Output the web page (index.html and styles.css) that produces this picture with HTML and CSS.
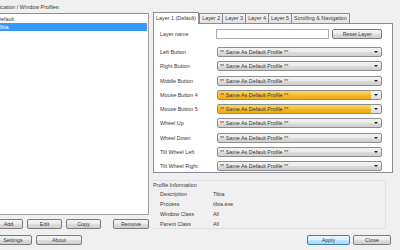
FILE: index.html
```html
<!DOCTYPE html>
<html lang="en">
    <head>
        <meta charset="UTF-8">
        <title>Profiles</title>
        <link rel="stylesheet" href="styles.css">
    </head>
    <body>
        <div class="window">
            <div class="main">
                <div class="profiles">
                    <div class="caption">Application / Window Profiles:</div>
                    <ul class="profile-list">
                        <li>Default</li>
                        <li class="selected">Tibia</li>
                    </ul>
                    <div class="list-buttons">
                        <button class="btn add">Add</button>
                        <button class="btn edit">Edit</button>
                        <button class="btn copy">Copy</button>
                        <button class="btn remove">Remove</button>
                    </div>
                </div>

                <div class="layers">
                    <div class="tabs">
                        <div class="tab active">Layer 1 (Default)</div>
                        <div class="tab">Layer 2</div>
                        <div class="tab">Layer 3</div>
                        <div class="tab">Layer 4</div>
                        <div class="tab">Layer 5</div>
                        <div class="tab">Scrolling &amp; Navigation</div>
                    </div>
                    <div class="tab-panel">
                        <div class="name-row">
                            <span class="label">Layer name</span>
                            <input class="name" type="text">
                            <button class="btn reset">Reset Layer</button>
                        </div>
                        <div class="mappings">
                            <span class="label">Left Button</span>
                            <div class="combo">** Same As Default Profile **</div>
                            <span class="label">Right Button</span>
                            <div class="combo">** Same As Default Profile **</div>
                            <span class="label">Middle Button</span>
                            <div class="combo">** Same As Default Profile **</div>
                            <span class="label">Mouse Button 4</span>
                            <div class="combo changed">** Same As Default Profile **</div>
                            <span class="label">Mouse Button 5</span>
                            <div class="combo changed">** Same As Default Profile **</div>
                            <span class="label">Wheel Up</span>
                            <div class="combo">** Same As Default Profile **</div>
                            <span class="label">Wheel Down</span>
                            <div class="combo">** Same As Default Profile **</div>
                            <span class="label">Tilt Wheel Left</span>
                            <div class="combo">** Same As Default Profile **</div>
                            <span class="label">Tilt Wheel Right</span>
                            <div class="combo">** Same As Default Profile **</div>
                        </div>
                    </div>
                    <div class="info">
                        <div class="info-title">Profile Information</div>
                        <div class="info-grid">
                            <span>Description</span><span>Tibia</span>
                            <span>Process</span><span>tibia.exe</span>
                            <span>Window Class</span><span>All</span>
                            <span>Parent Class</span><span>All</span>
                        </div>
                    </div>
                </div>
            </div>

            <div class="footer">
                <button class="btn settings">Settings</button>
                <button class="btn about">About</button>
                <div class="spacer"></div>
                <button class="btn apply">Apply</button>
                <button class="btn close">Close</button>
            </div>
        </div>
    </body>
</html>
```

FILE: styles.css
```css
html, body {
    margin: 0;
    padding: 0;
}

body {
    width: 400px;
    height: 250px;
    overflow: hidden;
    background-color: #f0f0f0;
    font-family: "Liberation Sans", Arial, sans-serif;
    font-size: 5.4px;
    color: #3a3a3a;
}

.window {
    display: flex;
    flex-direction: column;
    height: 250px;
}

.main {
    display: flex;
    gap: 4px;
    height: 235px;
}

/* left column, partly cut off by the screenshot edge */
.profiles {
    width: 155px;
    margin-left: -6px;
    display: flex;
    flex-direction: column;
}

.caption {
    height: 13px;
    line-height: 15px;
    margin-left: -5px;
    white-space: nowrap;
}

.profile-list {
    list-style: none;
    margin: 0;
    padding: 1px 1px;
    height: 198px;
    background: #fff;
    border: 1px solid #a0a0a0;
    border-left-color: #c8c8c8;
    border-top-color: #8e8f8f;
}

.profile-list li {
    height: 8px;
    line-height: 8px;
    padding-left: 1px;
}

.profile-list .selected {
    background-color: #3399ff;
    color: #fff;
}

.list-buttons {
    display: flex;
    margin-top: 4px;
    gap: 4px;
}

.btn {
    height: 10px;
    padding: 0;
    font-family: inherit;
    font-size: 5.4px;
    line-height: 8px;
    color: #3a3a3a;
    border: 1px solid #7a7a7a;
    border-radius: 2px;
    background: linear-gradient(#f4f4f4, #ebebeb 50%, #dddddd 50%, #cfcfcf);
}

.add { width: 29px; }
.edit { width: 35px; }
.copy { width: 35px; }
.remove { width: 36px; margin-left: auto; }

/* right column */
.layers {
    width: 240px;
    display: flex;
    flex-direction: column;
}

.tabs {
    display: flex;
    align-items: flex-end;
    height: 11px;
    margin-top: 12px;
    position: relative;
    z-index: 1;
}

.tab {
    height: 9px;
    line-height: 9px;
    padding: 0 2px;
    border: 1px solid #898c95;
    border-bottom: none;
    margin-left: -1px;
    background: linear-gradient(#f2f2f2, #e3e3e3);
    white-space: nowrap;
}

.tab.active {
    height: 11px;
    line-height: 11px;
    margin-left: 0;
    padding: 0 2px;
    background: #fff;
    margin-bottom: -1px;
    margin-right: 1px;
}

.tab-panel {
    height: 144px;
    padding: 4px 10px 0 6px;
    background: #fff;
    border: 1px solid #898c95;
}

.name-row {
    display: flex;
    align-items: center;
    height: 11px;
}

.label {
    width: 57px;
    white-space: nowrap;
}

.name {
    width: 113px;
    height: 10px;
    padding: 0;
    margin: 0;
    box-sizing: border-box;
    border: 1px solid #abadb3;
    background: #fff;
}

.reset {
    width: 50px;
    margin-left: 3px;
}

.mappings {
    display: grid;
    grid-template-columns: 57px 1fr;
    grid-auto-rows: 10px;
    row-gap: 4.3px;
    margin-top: 8px;
    align-items: center;
}

.combo {
    position: relative;
    height: 10px;
    box-sizing: border-box;
    line-height: 8px;
    padding-left: 2px;
    border: 1px solid #8d8d8d;
    border-radius: 2px;
    background: linear-gradient(#f2f2f2, #ebebeb 50%, #dddddd 50%, #cfcfcf);
    white-space: nowrap;
}

/* drop-down arrow */
.combo::after {
    content: "";
    position: absolute;
    right: 3px;
    top: 3px;
    border-left: 2px solid transparent;
    border-right: 2px solid transparent;
    border-top: 2px solid #222;
}

.combo.changed {
    background:
        linear-gradient(#f2f2f2, #dddddd) right / 10px 100% no-repeat,
        linear-gradient(#fcd36a, #f7c13c 50%, #f4b526 50%, #f1ab19);
}

.info {
    height: 47px;
    margin-top: 7px;
    border: 1px solid #e2e2e2;
    border-left: none;
    margin-right: 7px;
}

.info-title {
    height: 9px;
    line-height: 9px;
}

.info-grid {
    display: grid;
    grid-template-columns: 53px 1fr;
    grid-auto-rows: 10px;
    padding-left: 7px;
    line-height: 9px;
}

.footer {
    display: flex;
    height: 10px;
    gap: 4px;
    margin-left: -6px;
    margin-right: 9px;
}

.spacer {
    flex: 1;
}

.settings { width: 38px; }
.about { width: 46px; }
.apply {
    width: 43px;
    border-color: #3c7fb1;
    background: linear-gradient(#eaf6fd, #d9f0fc 50%, #bee6fd 50%, #a7d9f5);
}
.close { width: 38px; margin-left: -1px; }
```
